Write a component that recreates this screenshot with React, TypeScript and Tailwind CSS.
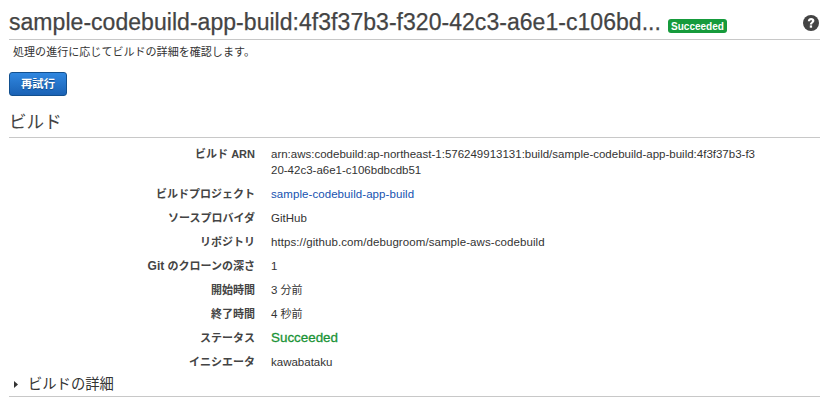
import type { ReactNode } from "react";

type Row = { label: ReactNode; value: ReactNode };

const rows: Row[] = [
  {
    label: "ビルド ARN",
    value: (
      <>
        arn:aws:codebuild:ap-northeast-1:576249913131:build/sample-codebuild-app-build:4f3f37b3-f3
        <br />
        20-42c3-a6e1-c106bdbcdb51
      </>
    ),
  },
  { label: "ビルドプロジェクト", value: <a className="tracking-[0.07px] text-[#1552b0]">sample-codebuild-app-build</a> },
  { label: "ソースプロバイダ", value: "GitHub" },
  { label: "リポジトリ", value: <span className="tracking-[0.08px]">https://github.com/debugroom/sample-aws-codebuild</span> },
  { label: <><span className="text-[12px]">Git </span>のクローンの深さ</>, value: "1" },
  { label: "開始時間", value: <>3 <span className="text-[11px]">分前</span></> },
  { label: "終了時間", value: <>4 <span className="text-[11px]">秒前</span></> },
  {
    label: "ステータス",
    value: <span className="text-[13.4px] text-[#1a9336] [-webkit-text-stroke:0.3px_#1a9336]">Succeeded</span>,
  },
  { label: "イニシエータ", value: "kawabataku" },
];

export default function App() {
  return (
    <main className="h-[412px] w-[830px] overflow-hidden bg-white pl-[9px] pr-2.5 font-['Liberation_Sans','Noto_Sans_CJK_JP',sans-serif] text-[11px] leading-4 text-[#333]">
      <header className="flex h-10 items-start border-b border-[#c8c8c8] pt-[7px]">
        <h1 className="w-[659px] shrink-0 whitespace-nowrap text-[23px] leading-[31px] tracking-[0.04px] text-[#444] [-webkit-text-stroke:0.25px_#444]">
          sample-codebuild-app-build:4f3f37b3-f320-42c3-a6e1-c106bd...
        </h1>
        <span className="mt-3 flex h-[14px] w-[59px] shrink-0 items-center justify-center rounded-[3px] bg-[#169b3c] pt-px text-[10px] font-bold leading-none text-white">
          Succeeded
        </span>
        <svg className="ml-auto mr-px mt-2 size-4" viewBox="0 0 16 16" aria-label="Help">
          <circle cx="8" cy="8" r="8" fill="#444" />
          <path d="M4.8 6.2C5 4 6.4 3.1 8.1 3.1c1.9 0 3.3 1 3.3 2.7 0 2-2.3 2.1-2.3 3.6H6.8c0-2.3 2.1-2.2 2.1-3.5 0-.5-.3-.8-.8-.8-.6 0-.9.4-.9 1.1z" fill="#fff" />
          <rect x="6.8" y="10.4" width="2.3" height="2.3" fill="#fff" />
        </svg>
      </header>
      <p className="mt-1 pl-1 text-[11.05px]">処理の進行に応じてビルドの詳細を確認します。</p>
      <button className="mt-3 flex h-6 w-[58px] items-center justify-center rounded-[3px] border border-[#12508f] bg-linear-to-b from-[#3087e0] to-[#1a62b5] text-[11.3px] font-bold text-white [text-shadow:0_1px_1px_#124a8a]">
        再試行
      </button>
      <h2 className="flex h-[42px] items-end border-b border-[#c8c8c8] pb-1 text-[17.6px] leading-[22px] text-[#444]">ビルド</h2>
      <dl className="flex flex-col gap-2 pt-2">
        {rows.map((row, index) => (
          <div key={index} className="flex">
            <dt className="w-[246px] shrink-0 text-right font-bold text-[#444]">{row.label}</dt>
            <dd className="ml-4 whitespace-nowrap text-[11.5px]">{row.value}</dd>
          </div>
        ))}
      </dl>
      <div className="mt-1 flex h-[23px] items-center border-b border-[#c8c8c8] pb-0.5 text-[14.3px] leading-[18px]">
        <svg className="ml-[5px] mr-[10px] h-[7px] w-1" viewBox="0 0 4 7" aria-hidden="true">
          <path d="M0 0l4 3.5L0 7z" fill="#333" />
        </svg>
        <span>ビルドの詳細</span>
      </div>
    </main>
  );
}
